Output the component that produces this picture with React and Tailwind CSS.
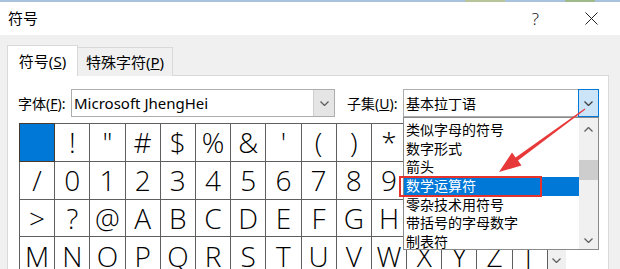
const rows = [
  ['', '!', '"', '#', '$', '%', '&', "'", '(', ')', '*', '+', ',', '-', '.'],
  ['/', '0', '1', '2', '3', '4', '5', '6', '7', '8', '9', ':', ';', '<', '='],
  ['>', '?', '@', 'A', 'B', 'C', 'D', 'E', 'F', 'G', 'H', 'I', 'J', 'K', 'L'],
  ['M', 'N', 'O', 'P', 'Q', 'R', 'S', 'T', 'U', 'V', 'W', 'X', 'Y', 'Z', '['],
]

const subsets = ['类似字母的符号', '数字形式', '箭头', '数学运算符', '零杂技术用符号', '带括号的字母数字', '制表符']

const Chevron = ({ up = false, color = '#606060' }) => (
  <svg width="9" height="5" viewBox="0 0 9 5">
    <polyline
      points={up ? '0.5,4.5 4.5,0.5 8.5,4.5' : '0.5,0.5 4.5,4.5 8.5,0.5'}
      fill="none"
      stroke={color}
      strokeWidth="1.3"
    />
  </svg>
)

export default function App() {
  return (
    <div className="relative w-[620px] h-[269px] overflow-hidden bg-[#f0f0f0] font-['Noto_Sans','Noto_Sans_CJK_SC',sans-serif] text-black">
      {/* strip of the window behind */}
      <div className="flex h-[2px] bg-[#a9c3df]">
        <div className="w-[465px]" />
        <div className="w-[40px] bg-[#b8c49a]" />
        <div className="w-[60px]" />
        <div className="w-[30px] bg-[#9fb98a]" />
      </div>

      {/* title bar */}
      <div className="flex items-center h-[33px] bg-white pl-[8px] text-[15px]">
        <span>符号</span>
        <span className="ml-auto mr-[46px] text-[17px] font-light text-[#222]">?</span>
        <svg className="mr-[22px]" width="13" height="13" viewBox="0 0 13 13">
          <path d="M0.5 0.5 L12.5 12.5 M12.5 0.5 L0.5 12.5" stroke="#222" strokeWidth="1" />
        </svg>
      </div>

      <div className="pl-[7px] pr-[11px] pt-[10px]">
        {/* tabs */}
        <div className="flex items-end h-[31px] text-[15px]">
          <div className="relative z-10 flex items-center justify-center w-[71px] h-[31px] bg-white border-x border-t border-[#d9d9d9]">
            符号(<u>S</u>)
          </div>
          <div className="flex items-center justify-center w-[95px] h-[29px] bg-[#f0f0f0] border-r border-t border-[#d9d9d9]">
            特殊字符(<u>P</u>)
          </div>
        </div>

        {/* panel */}
        <div className="-mt-px h-[220px] bg-white border border-[#d9d9d9] pl-[10px] pt-[13px]">
          <div className="flex items-center h-[28px] text-[14px]">
            <span className="w-[53px]">字体(<u>F</u>):</span>
            <div className="flex items-center w-[264px] h-[28px] border border-[#adadad] bg-white">
              <span className="flex-1 pl-[2px] text-[15px] text-black">Microsoft JhengHei</span>
              <div className="flex items-center justify-center w-[21px] h-[26px] bg-[#e5e5e5] border-l border-[#cfcfcf]">
                <Chevron />
              </div>
            </div>
            <span className="ml-[12px] w-[56px]">子集(<u>U</u>):</span>
            <div className="flex items-center w-[196px] h-[28px] border border-[#adadad] bg-white">
              <span className="flex-1 pl-[2px]">基本拉丁语</span>
              <div className="flex items-center justify-center w-[21px] h-[28px] -my-px -mr-px bg-[#cce4f7] border border-[#0078d7]">
                <Chevron color="#404040" />
              </div>
            </div>
          </div>

          {/* character grid */}
          <div className="flex mt-[6px] ml-px">
            <div className="grid grid-cols-[repeat(15,34.2px)] auto-rows-[36.8px] gap-px p-px bg-[#5f5f5f] font-['Open_Sans','Noto_Sans',sans-serif] font-light">
              {rows.flat().map((ch, i) => (
                <div
                  key={i}
                  className={
                    i === 0
                      ? 'bg-[#0078d7] outline outline-1 outline-[#4a3a2a]'
                      : 'flex items-center justify-center bg-white text-[28px] leading-none'
                  }
                >
                  {ch}
                </div>
              ))}
            </div>
            <div className="flex flex-col justify-end w-[18px] h-[146px] bg-[#f0f0f0]">
              <div className="flex items-center justify-center h-[17px]">
                <Chevron />
              </div>
            </div>
          </div>
        </div>
      </div>

      {/* open subset dropdown */}
      <div className="absolute left-[403px] top-[117px] flex w-[196px] h-[133px] bg-white border border-[#8a8a8a] text-[14px]">
        <div className="flex-1 pt-[3px]">
          {subsets.map((s, i) => (
            <div
              key={s}
              className={`h-[18.67px] leading-[18.67px] pl-[2px] ${i === 3 ? 'bg-[#0078d7] text-white' : ''}`}
            >
              {s}
            </div>
          ))}
        </div>
        <div className="flex flex-col w-[19px] bg-[#f0f0f0]">
          <div className="flex items-center justify-center h-[22px]">
            <Chevron up />
          </div>
          <div className="mt-[20px] h-[20px] bg-[#cdcdcd]" />
          <div className="flex items-end justify-center flex-1 pb-[6px]">
            <Chevron />
          </div>
        </div>
      </div>

      {/* red annotation box */}
      <div className="absolute left-[399px] top-[176px] w-[143px] h-[21px] border-2 border-[#e5322d]" />

      {/* red annotation arrow */}
      <svg className="absolute left-0 top-0 pointer-events-none" width="620" height="269">
        <polygon
          points="585.3,109.4 584.7,108.6 515.6,157.4 512,152.5 499,172 521.5,165.5 518,160.6"
          fill="#e8393a"
        />
      </svg>
    </div>
  )
}
